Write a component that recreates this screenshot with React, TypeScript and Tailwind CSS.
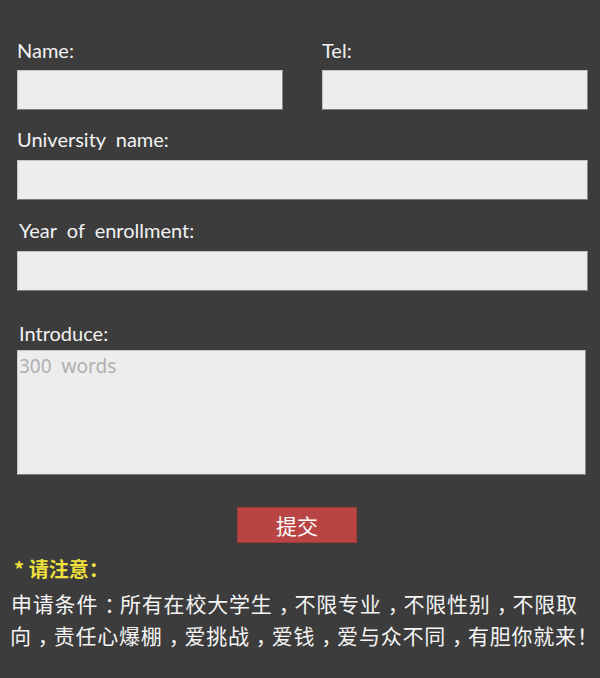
const labelCls =
  "block text-[20px] leading-[24px] text-[#f2f2f2] [word-spacing:5px] font-['Lato','Noto_Sans',sans-serif]";
const inputCls =
  "block h-[40px] w-full bg-[#ededed] border border-[#c4c4c4] border-b-[#7a7a7a] border-r-[#8a8a8a] outline-none px-2 text-[16px]";

// full-width punctuation moved to the middle of its cell, as in the original
const P = ({ c }: { c: string }) => (
  <span className="pl-[6px] tracking-[-5.2px]">{c}</span>
);

export default function App() {
  return (
    <div className="min-h-[678px] w-[600px] bg-[#3c3c3c] pt-[38px] font-['Lato','Noto_Sans_CJK_SC',sans-serif]">
      <form className="pl-[17px] pr-[12px]">
        <div className="grid grid-cols-2 gap-x-[39px]">
          <div>
            <label htmlFor="name" className={labelCls + " mb-[8px]"}>
              Name:
            </label>
            <input id="name" type="text" className={inputCls} />
          </div>
          <div>
            <label htmlFor="tel" className={labelCls + " mb-[8px]"}>
              Tel:
            </label>
            <input id="tel" type="tel" className={inputCls} />
          </div>
        </div>

        <label htmlFor="uni" className={labelCls + " mt-[17px] mb-[9px]"}>
          University name:
        </label>
        <input id="uni" type="text" className={inputCls} />

        <label htmlFor="year" className={labelCls + " mt-[18px] mb-[9px] pl-[2px]"}>
          Year of enrollment:
        </label>
        <input id="year" type="text" className={inputCls} />

        <label htmlFor="intro" className={labelCls + " mt-[30px] mb-[5px] pl-[2px]"}>
          Introduce:
        </label>
        <textarea
          id="intro"
          placeholder="300 words"
          className="block h-[125px] w-[569px] resize-none bg-[#ededed] border border-[#c4c4c4] border-b-[#7a7a7a] border-r-[#8a8a8a] outline-none px-[1px] py-0 text-[19px] leading-[30px] [word-spacing:5px] text-[#333] placeholder:text-[#b0b0b0] font-['Noto_Sans',sans-serif]"
        />

        <button
          type="button"
          className="ml-[220px] mt-[32px] block h-[36px] w-[120px] bg-[#b84444] border border-[#a33a3a] text-white text-[21px] leading-none font-['Noto_Sans_CJK_SC',sans-serif]"
        >
          提交
        </button>
      </form>

      <div className="mt-[12px] pl-[14px] text-[20px] leading-[28px] font-bold text-[#f0e03c] font-['Noto_Sans_CJK_SC',sans-serif]">
        * 请注意：
      </div>
      <p className="mt-[4px] pl-[11px] text-[21px] leading-[32px] tracking-[0.8px] text-[#f4f4f4] font-['Noto_Sans_CJK_SC',sans-serif]">
        <span className="block whitespace-nowrap">
          申请条件<P c="：" />所有在校大学生<P c="，" />不限专业<P c="，" />不限性别<P c="，" />不限取
        </span>
        <span className="block whitespace-nowrap -ml-[1px]">
          向<P c="，" />责任心爆棚<P c="，" />爱挑战<P c="，" />爱钱<P c="，" />爱与众不同<P c="，" />有胆你就来！
        </span>
      </p>
    </div>
  );
}
